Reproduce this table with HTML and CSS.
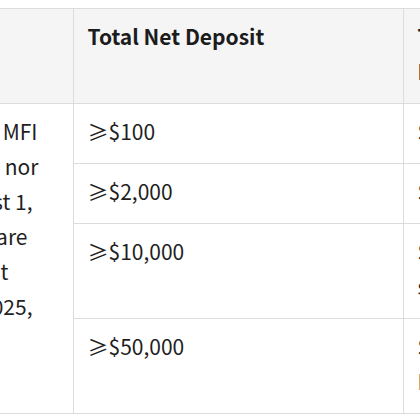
FILE: index.html
```html
<!DOCTYPE html>
<html lang="en">
<head>
<meta charset="utf-8">
<title>Deposit tiers</title>
<link rel="stylesheet" href="styles.css">
</head>
<body>
<table class="tiers">
  <colgroup>
    <col class="col-rule">
    <col class="col-deposit">
    <col class="col-reward">
  </colgroup>
  <thead>
    <tr>
      <th class="rule"></th>
      <th>Total Net Deposit</th>
      <th>Trading Bonus<br>Items</th>
    </tr>
  </thead>
  <tbody>
    <tr>
      <td class="rule" rowspan="4">
        <div class="ln l1"><span>Clients registered with MFI</span></div>
        <div class="ln l2"><span>who have neither traded nor</span></div>
        <div class="ln l3"><span>deposited since August 1,</span></div>
        <div class="ln l4"><span>and new clients who are</span></div>
        <div class="ln l5"><span>making their first deposit</span></div>
        <div class="ln l6"><span>on or after August 1, 2025,</span></div>
      </td>
      <td>≥$100</td>
      <td>$20 Bonus</td>
    </tr>
    <tr>
      <td>≥$2,000</td>
      <td>$50 Bonus</td>
    </tr>
    <tr>
      <td>≥$10,000</td>
      <td>$200 Bonus<br>surprise gift</td>
    </tr>
    <tr>
      <td>≥$50,000</td>
      <td>$1,000 Bonus<br>New gift box</td>
    </tr>
  </tbody>
</table>
</body>
</html>
```

FILE: styles.css
```css
html, body {
  margin: 0;
  background: #ffffff;
  overflow: hidden;
}

body {
  padding-top: 8px;
  font-family: "Noto Sans CJK SC", "Noto Sans", sans-serif;
  font-size: 21px;
  color: #1f1f1f;
}

.tiers {
  border-collapse: collapse;
  table-layout: fixed;
  width: 603px;
}

.col-rule { width: 73px; }
.col-deposit { width: 330px; }
.col-reward { width: 200px; }

.tiers th,
.tiers td {
  border: 1px solid #dcdcdc;
  padding: 10px 14px 14px;
  line-height: 35px;
  text-align: left;
  vertical-align: top;
  font-weight: 400;
  white-space: nowrap;
}

.tiers th {
  background: #f5f5f6;
  font-weight: 700;
  color: #1c1c1c;
}

.tiers .rule {
  border-left: none;
  padding-left: 0;
  padding-right: 0;
}

.ln {
  display: flex;
  justify-content: flex-end;
}

.ln span { white-space: nowrap; }

.l1 { padding-right: 35px; }
.l2 { padding-right: 34px; }
.l3 { padding-right: 40px; }
.l4 { padding-right: 45px; }
.l5 { padding-right: 64px; }
.l6 { padding-right: 40px; }
```
